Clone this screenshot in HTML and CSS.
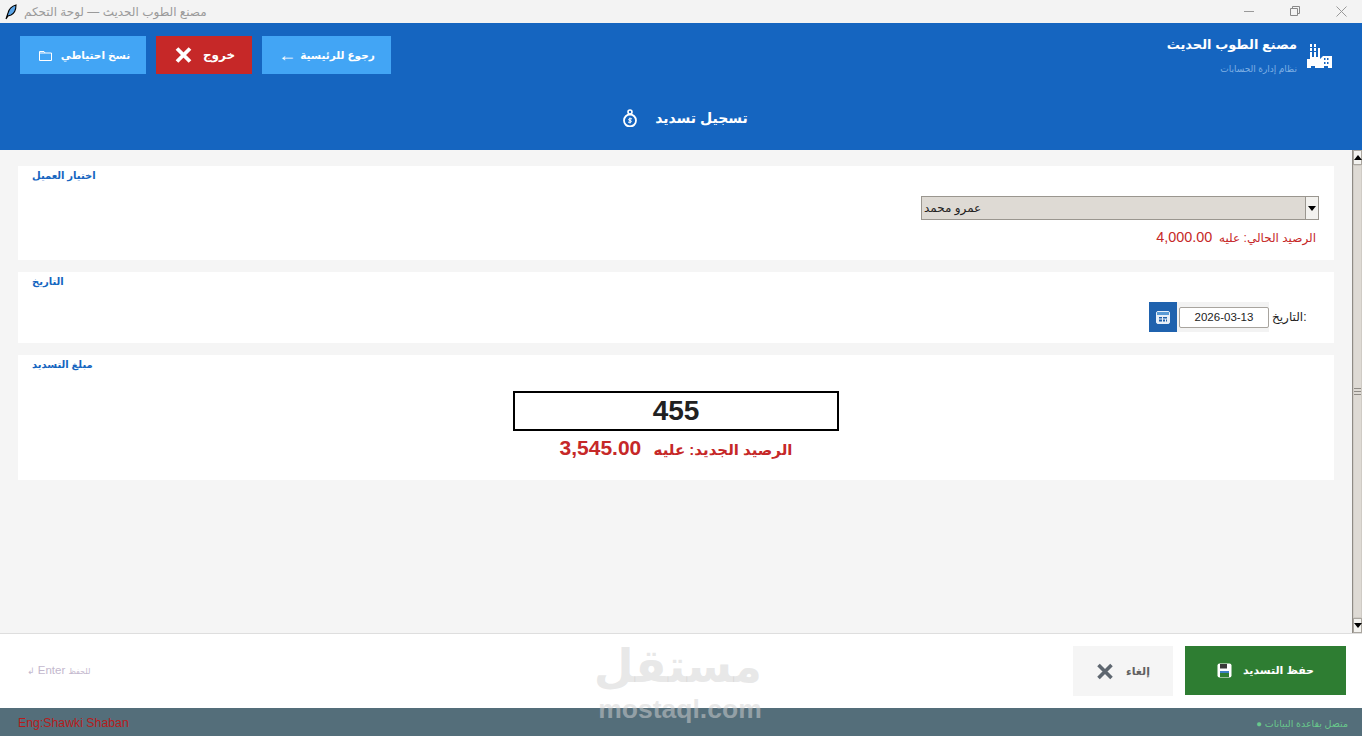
FILE: index.html
```html
<!DOCTYPE html>
<html lang="ar">
<head>
<meta charset="utf-8">
<title>مصنع الطوب الحديث — لوحة التحكم</title>
<link rel="stylesheet" href="styles.css">
</head>
<body>
<div class="window">
  <div class="titlebar">
    <div class="title-left">
      <svg class="feather" width="12" height="16" viewBox="0 0 12 16"><path d="M1 15 3 9C4 5 7 2 11 1 11 5 10 9 6 11L3 12Z" fill="#5aa5e8" stroke="#000" stroke-width="1.100"/></svg>
      <span class="title-text" dir="rtl">مصنع الطوب الحديث — لوحة التحكم</span>
    </div>
    <div class="win-controls">
      <svg width="11" height="11" viewBox="0 0 11 11"><path d="M0 5.500H10" stroke="#999" fill="none"/></svg>
      <svg width="11" height="11" viewBox="0 0 11 11"><path d="M.5 2.500H7.500V9.500H.5ZM2.500 2.500V.5H9.500V7.500H7.500" stroke="#888" fill="none"/></svg>
      <svg width="11" height="11" viewBox="0 0 11 11"><path d="M.5.5 10.500 10.500M10.500.5.5 10.500" stroke="#999" fill="none"/></svg>
    </div>
  </div>

  <header class="header">
    <div class="header-top">
      <div class="actions">
        <button class="btn btn-blue btn-backup"><span dir="rtl">نسخ احتياطي</span><svg width="13" height="12" viewBox="0 0 13 12"><path d="M.5 2.500H5L6 4H12.500V11.500H.5ZM.5 4H6" fill="none" stroke="#fff"/></svg></button>
        <button class="btn btn-red"><span dir="rtl">خروج</span><svg width="17" height="16" viewBox="0 0 17 16"><path d="M2 1.500 15 14.500M15 1.500 2 14.500" stroke="#fff" stroke-width="3.800" fill="none"/></svg></button>
        <button class="btn btn-blue btn-back"><span dir="rtl">رجوع للرئيسية</span><span class="arrow">←</span></button>
      </div>
      <div class="brand">
        <div class="brand-text">
          <div class="brand-name" dir="rtl">مصنع الطوب الحديث</div>
          <div class="brand-sub" dir="rtl">نظام إدارة الحسابات</div>
        </div>
        <svg class="factory" width="25" height="26" viewBox="0 0 25 26"><path fill="#fff" d="M3 0H5V13H3ZM7 0H9V13H7ZM11 4H13V13H11ZM0 24V15H3V13H13V15L16 12H25V24H21V22H17V24H8V22H4V24Z"/><path fill="#1565c0" d="M3 3H5V4H3ZM7 3H9V4H7ZM3 7H5V8H3ZM7 7H9V8H7ZM17 14H18.500V16H17ZM20 14H21.500V16H20ZM17 18H18.500V20H17ZM20 18H21.500V20H20Z"/></svg>
      </div>
    </div>
    <div class="page-title">
      <span dir="rtl">تسجيل تسديد</span>
      <svg width="16" height="18" viewBox="0 0 16 18"><circle cx="8" cy="3" r="2" fill="none" stroke="#fff" stroke-width="1.600"/><circle cx="8" cy="11.500" r="6" fill="none" stroke="#fff" stroke-width="1.800"/><path d="M8 8.500V14.500M10 9.800H7Q6 11.500 8 11.500 10 11.500 9 13.200H6" fill="none" stroke="#fff"/></svg>
    </div>
  </header>

  <div class="middle">
    <main class="content">
      <section class="card card-client">
        <h2 class="card-title" dir="rtl">اختيار العميل</h2>
        <div class="combo-row">
          <div class="combo">
            <span class="combo-value" dir="rtl">عمرو محمد</span>
            <span class="combo-arrow"><i class="tri-down"></i></span>
          </div>
        </div>
        <div class="balance" dir="rtl">الرصيد الحالي: عليه&nbsp; <span class="balance-num">4,000.00</span></div>
      </section>

      <section class="card card-date">
        <h2 class="card-title" dir="rtl">التاريخ</h2>
        <div class="date-row">
          <div class="date-group">
            <span class="cal-btn"><svg width="14" height="14" viewBox="0 0 14 14"><rect x=".5" y="1.500" width="13" height="12" rx="1.500" fill="#e8f0f8" stroke="#e8f0f8"/><rect x="1" y="2" width="12" height="3" fill="#5b9bd5"/><path fill="#1f5fa8" d="M3 7H6V8.500H3ZM7 7H11V8.500H7ZM3 9.500H6V11.500H3ZM7 9.500H9V11.500H7ZM10 9.500H11V11.500H10Z"/></svg></span>
            <span class="date-field">2026-03-13</span>
          </div>
          <span class="date-label" dir="ltr">التاريخ:</span>
        </div>
      </section>

      <section class="card card-amount">
        <h2 class="card-title" dir="rtl">مبلغ التسديد</h2>
        <div class="amount-box">455</div>
        <div class="new-balance" dir="rtl">الرصيد الجديد: عليه&nbsp; <span class="new-num">3,545.00</span></div>
      </section>
    </main>
    <div class="scrollbar">
      <span class="scroll-btn"><i class="tri-up"></i></span>
      <span class="scroll-thumb"><i class="grip"></i></span>
      <span class="scroll-btn"><i class="tri-down"></i></span>
    </div>
  </div>

  <footer class="footer">
    <div class="hint"><span class="hint-arrow">↲</span> Enter <span dir="rtl" class="hint-ar">للحفظ</span></div>
    <div class="footer-actions">
      <button class="btn-cancel"><svg width="18" height="17" viewBox="0 0 18 17"><path d="M2.500 2 15.500 15M15.500 2 2.500 15" stroke="#5f6770" stroke-width="3.600" fill="none"/></svg><span dir="rtl">إلغاء</span></button>
      <button class="btn-save"><svg width="15" height="15" viewBox="0 0 15 15"><rect x=".5" y=".5" width="14" height="14" rx="2" fill="#fff"/><rect x="3" y="1" width="7" height="4.500" fill="#3a3a3a"/><rect x="3" y="8" width="9" height="6" fill="#3d7fc4"/><rect x="3" y="10" width="9" height="4" fill="#2e7d32"/></svg><span dir="rtl">حفظ التسديد</span></button>
    </div>
  </footer>

  <div class="statusbar">
    <span class="credit">Eng:Shawki Shaban</span>
    <span class="connected" dir="rtl">متصل بقاعدة البيانات ●</span>
  </div>

  <div class="watermark">
    <div class="wm-ar" dir="rtl">مستقل</div>
    <div class="wm-en">mostaql.com</div>
  </div>
</div>
</body>
</html>
```
FILE: styles.css
```css
* { box-sizing: border-box; margin: 0; padding: 0; }
html, body { width: 100%; height: 100%; overflow: hidden; }
body { font-family: "Liberation Sans", "DejaVu Sans", sans-serif; background: #f5f5f5; }
.window { position: relative; display: flex; flex-direction: column; height: 736px; }

.titlebar { height: 23px; flex: none; display: flex; justify-content: space-between; align-items: center; background: #f3f3f3; }
.title-left { display: flex; align-items: center; gap: 7px; padding-left: 5px; }
.title-text { font-size: 12px; color: #9a9a9a; }
.win-controls { display: flex; gap: 35px; padding-right: 15px; align-items: center; }

.header { height: 127px; flex: none; background: #1565c0; color: #fff; display: flex; flex-direction: column; }
.header-top { display: flex; justify-content: space-between; padding: 13px 30px 0 20px; height: 80px; }
.actions { display: flex; gap: 10px; align-items: flex-start; }
.btn { height: 38px; border: 0; color: #fff; font: bold 10.500px "Liberation Sans", "DejaVu Sans", sans-serif; display: flex; align-items: center; justify-content: center; flex-direction: row-reverse; gap: 9px; }
.btn-blue { background: #42a5f5; }
.btn-red { background: #c62828; width: 96px; gap: 11px; font-size: 12px; padding-left: 2px; }
.btn-backup { width: 126px; padding-left: 3px; }
.btn-back { width: 129px; gap: 4px; }
.arrow { font-size: 18px; font-weight: normal; line-height: 15px; }
.brand { display: flex; align-items: flex-start; gap: 10px; }
.brand-text { text-align: right; }
.brand-name { font-size: 13px; font-weight: bold; line-height: 17px; }
.brand-sub { font-size: 9px; color: #7fb0e4; line-height: 11px; margin-top: 11px; }
.factory { margin-top: 8px; }
.page-title { display: flex; justify-content: center; align-items: center; gap: 17px; flex-direction: row-reverse; font-size: 14px; font-weight: bold; padding-left: 8px; padding-top: 6px; }

.middle { flex: 1; display: flex; min-height: 0; }
.content { flex: 1; padding: 16px 18px 0; display: flex; flex-direction: column; gap: 12px; background: #f5f5f5; }
.card { background: #fff; display: flex; flex-direction: column; flex: none; }
.card-client { height: 94px; }
.card-date { height: 71px; }
.card-amount { height: 125px; align-items: center; }
.card-title { font-size: 10px; font-weight: bold; color: #1565c0; line-height: 20px; padding-left: 14px; align-self: flex-start; }
.combo-row { display: flex; justify-content: flex-end; padding: 10px 15px 0 0; }
.combo { width: 398px; height: 24px; background: #dedad4; border: 1px solid #9a968f; display: flex; justify-content: space-between; align-items: center; }
.combo-value { font-size: 12px; color: #222; padding-left: 2px; }
.combo-arrow { width: 13px; height: 22px; background: #f3f2ef; border-left: 1px solid #9a968f; display: flex; align-items: center; justify-content: center; }
.tri-down { width: 0; height: 0; border: 4px solid transparent; border-top: 5px solid #000; border-bottom: 0; }
.tri-up { width: 0; height: 0; border: 4px solid transparent; border-bottom: 5px solid #000; border-top: 0; }
.balance { align-self: flex-end; font-size: 12px; color: #c62828; padding: 8px 18px 0 0; line-height: 18px; }
.balance-num { font-size: 14.400px; }
.date-row { display: flex; justify-content: flex-end; align-items: center; gap: 3px; padding: 10px 26px 0 0; }
.date-group { display: flex; align-items: center; gap: 2px; background: #f3f3f3; height: 30px; }
.cal-btn { width: 28px; height: 30px; background: #1f62ae; display: flex; align-items: center; justify-content: center; }
.date-field { width: 90px; height: 21px; background: #fff; border: 1px solid #a8a49e; border-radius: 2px; font-size: 11.500px; line-height: 19px; text-align: center; color: #222; }
.date-label { font-size: 12px; color: #222; width: 36px; }
.amount-box { width: 326px; height: 40px; margin-top: 16px; border: 2px solid #000; background: #fff; text-align: center; font-size: 28px; font-weight: bold; line-height: 36px; color: #212121; }
.new-balance { font-size: 15px; font-weight: bold; color: #c62828; line-height: 20px; margin-top: 7px; }
.new-num { font-size: 21px; margin-right: 4px; }

.scrollbar { width: 10px; flex: none; background: #dedad4; border-left: 1px solid #8f8b85; display: flex; flex-direction: column; }
.scroll-btn { height: 15px; flex: none; background: #f3f2ef; border: 1px solid #aaa69f; display: flex; align-items: center; justify-content: center; }
.scroll-thumb { flex: 1; display: flex; align-items: center; justify-content: center; border: 1px solid #cfcbc5; }
.grip { width: 100%; height: 8px; background: repeating-linear-gradient(#8f8b85 0 1px, #dedad4 1px 3px); }

.footer { height: 75px; flex: none; background: #fff; border-top: 1px solid #dedede; display: flex; justify-content: space-between; align-items: flex-start; padding: 12px 16px 0 27px; }
.hint { font-size: 11.500px; color: #c3b8ce; padding-top: 18px; }
.hint-arrow { font-size: 9px; }
.hint-ar { font-size: 8px; }
.footer-actions { display: flex; gap: 12px; }
.btn-cancel { width: 100px; height: 50px; border: 0; background: #f5f5f5; color: #616161; font: bold 11px "Liberation Sans", "DejaVu Sans", sans-serif; display: flex; align-items: center; justify-content: center; gap: 12px; }
.btn-save { width: 161px; height: 49px; border: 0; background: #2e7d32; color: #fff; font: bold 11px "Liberation Sans", "DejaVu Sans", sans-serif; display: flex; align-items: center; justify-content: center; gap: 11px; }

.statusbar { height: 28px; flex: none; background: #546e7a; display: flex; justify-content: space-between; align-items: center; padding: 2px 14px 0 18px; }
.credit { font-size: 12.300px; color: #b71c1c; }
.connected { font-size: 9.500px; color: #69c98c; }

.watermark { position: absolute; left: 598px; top: 639px; width: 164px; text-align: center; pointer-events: none; }
.wm-ar { font-size: 46px; font-weight: bold; line-height: 54px; color: rgba(200,200,200,.42); font-family: "DejaVu Sans", sans-serif; }
.wm-en { font-size: 26.500px; font-weight: bold; line-height: 26px; margin-top: 3px; color: rgba(210,210,210,.5); font-family: "Liberation Sans", sans-serif; }
```
